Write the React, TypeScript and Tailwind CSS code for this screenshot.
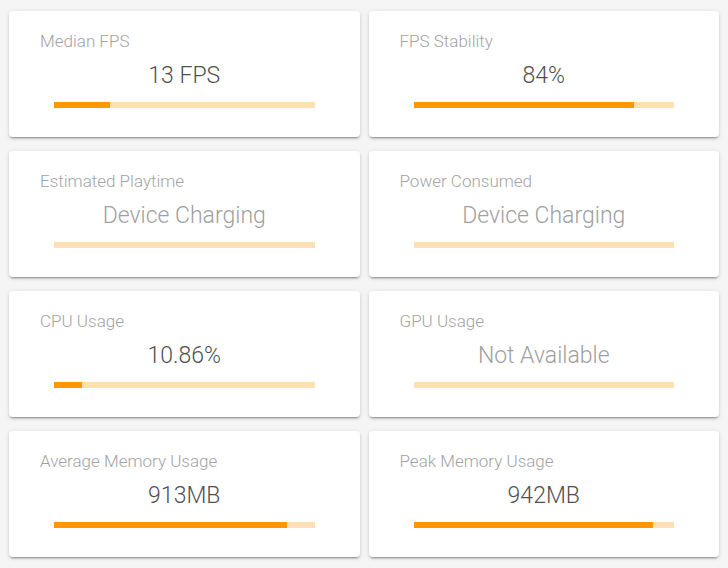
import React from "react";

type Item = { title: string; value: string; pct: number; muted?: boolean };

const items: Item[] = [
  { title: "Median FPS", value: "13 FPS", pct: 21.5 },
  { title: "FPS Stability", value: "84%", pct: 84.5 },
  { title: "Estimated Playtime", value: "Device Charging", pct: 0, muted: true },
  { title: "Power Consumed", value: "Device Charging", pct: 0, muted: true },
  { title: "CPU Usage", value: "10.86%", pct: 10.86 },
  { title: "GPU Usage", value: "Not Available", pct: 0, muted: true },
  { title: "Average Memory Usage", value: "913MB", pct: 89.5 },
  { title: "Peak Memory Usage", value: "942MB", pct: 92 },
];

function Card({ item }: { item: Item }) {
  return (
    <div className="h-[126px] bg-white rounded-[4px] shadow-[0_2px_2px_0_rgba(0,0,0,0.14),0_3px_1px_-2px_rgba(0,0,0,0.2),0_1px_5px_0_rgba(0,0,0,0.12)] pt-[19px] px-[31px] flex flex-col">
      <div className="text-[17px] leading-[22px] font-light text-[#a3a3a3]">{item.title}</div>
      <div
        className={`mt-[11px] text-center text-[23px] leading-[26px] font-light ${
          item.muted ? "text-[#a0a0a0]" : "text-[#505050]"
        }`}
      >
        {item.value}
      </div>
      <div className="mt-[13px] mx-[14px] h-[6px] bg-[#ffe0b2]">
        <div className="h-full bg-[#ff9800]" style={{ width: `${item.pct}%` }} />
      </div>
    </div>
  );
}

export default function App() {
  return (
    <div
      className="w-[728px] h-[568px] bg-[#f5f5f5] pt-[11px] px-[9px]"
      style={{ fontFamily: "'Roboto Light', Roboto, 'Noto Sans', sans-serif" }}
    >
      <div className="grid grid-cols-2 gap-x-[9px] gap-y-[14px]">
        {items.map((it) => (
          <Card key={it.title} item={it} />
        ))}
      </div>
    </div>
  );
}
